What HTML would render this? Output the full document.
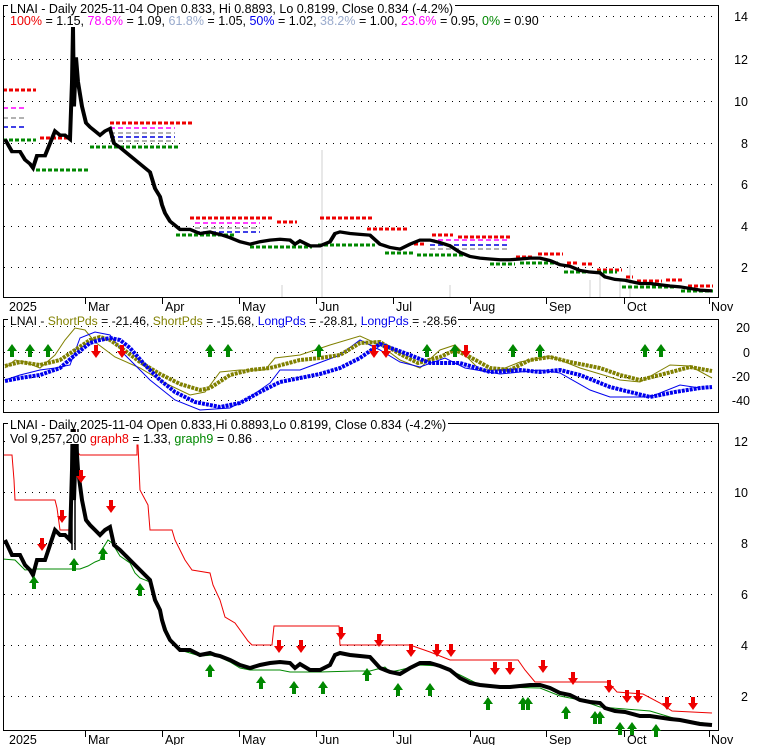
<!DOCTYPE html>
<html><head><meta charset="utf-8"><style>
html,body{margin:0;padding:0;background:#fff;}
svg{display:block;font-family:"Liberation Sans",sans-serif;}
</style></head><body>
<svg width="780" height="745" viewBox="0 0 780 745" xmlns="http://www.w3.org/2000/svg">
<defs>
<clipPath id="c1"><rect x="4" y="6" width="714" height="291"/></clipPath>
<clipPath id="c3"><rect x="4" y="424" width="714" height="306"/></clipPath>
<clipPath id="c2"><rect x="4" y="320" width="714" height="92"/></clipPath>
<polyline id="px" fill="none" points="5,540 12,555 20,555 25,565 30,570 33,575 37,560 45,560 50,545 55,530 60,535 65,535 70,540 72,470 73,403 74,500 76,440 78,470 82,500 86,520 90,525 95,530 100,535 105,530 110,527 114,545 120,550 125,555 130,560 135,565 140,570 150,580 155,600 160,610 162,620 165,630 170,640 175,645 180,650 190,650 200,655 210,653 215,655 220,656 230,660 240,665 250,668 260,665 270,663 280,662 290,663 295,668 300,664 310,670 320,670 330,665 335,655 340,653 350,655 360,656 370,657 380,668 385,670 390,672 400,674 410,668 420,663 430,663 440,666 450,670 460,678 470,683 480,685 490,686 500,687 510,687 520,686 530,685 540,685 550,688 560,693 570,695 580,700 590,702 600,703 605,708 615,711 625,712 640,716 650,716 670,719 680,720 690,722 700,724 712,725"/>
<g id="up"><polygon points="0,0 5,7 2,7 2,13 -2,13 -2,7 -5,7" fill="#008800"/></g>
<g id="dn"><polygon points="0,13 5,6 2,6 2,0 -2,0 -2,6 -5,6" fill="#ee0000"/></g>
</defs>

<!-- PANEL 1 -->
<rect x="3.5" y="5.5" width="715" height="292" fill="none" stroke="#000"/>
<g stroke="#000" stroke-dasharray="1,6" stroke-width="1">
<line x1="4" y1="16.5" x2="718" y2="16.5"/><line x1="4" y1="59.5" x2="718" y2="59.5"/><line x1="4" y1="101.5" x2="718" y2="101.5"/><line x1="4" y1="143.5" x2="718" y2="143.5"/><line x1="4" y1="184.5" x2="718" y2="184.5"/><line x1="4" y1="226.5" x2="718" y2="226.5"/><line x1="4" y1="267.5" x2="718" y2="267.5"/>
</g>
<g stroke="#e8e8e8" stroke-width="2">
<line x1="322" y1="150" x2="322" y2="297"/><line x1="630" y1="265" x2="630" y2="297"/><line x1="600" y1="275" x2="600" y2="297"/><line x1="590" y1="280" x2="590" y2="297"/><line x1="450" y1="285" x2="450" y2="297"/><line x1="282" y1="285" x2="282" y2="297"/><line x1="620" y1="280" x2="620" y2="297"/>
</g>
<g clip-path="url(#c1)" stroke-width="3" fill="none" stroke-dasharray="4,2">
<g stroke="#ee0000">
<line x1="3" y1="90" x2="36" y2="90"/><line x1="40" y1="138" x2="68" y2="138"/><line x1="110" y1="123" x2="192" y2="123"/><line x1="190" y1="218" x2="272" y2="218"/><line x1="277" y1="222" x2="297" y2="222"/><line x1="320" y1="218" x2="372" y2="218"/><line x1="367" y1="229" x2="409" y2="229"/><line x1="414" y1="244" x2="424" y2="244"/><line x1="432" y1="235" x2="453" y2="235"/><line x1="458" y1="237" x2="512" y2="237"/><line x1="516" y1="257" x2="534" y2="257"/><line x1="538" y1="254" x2="563" y2="254"/><line x1="567" y1="263" x2="578" y2="263"/><line x1="582" y1="264" x2="592" y2="264"/><line x1="597" y1="270" x2="622" y2="270"/><line x1="626" y1="277" x2="633" y2="277"/><line x1="637" y1="281" x2="662" y2="281"/><line x1="666" y1="280" x2="683" y2="280"/><line x1="688" y1="286" x2="713" y2="286"/>
</g>
<g stroke="#008800">
<line x1="3" y1="140" x2="36" y2="140"/><line x1="36" y1="170" x2="88" y2="170"/><line x1="90" y1="147" x2="178" y2="147"/><line x1="176" y1="235" x2="236" y2="235"/><line x1="250" y1="247" x2="312" y2="247"/><line x1="318" y1="245" x2="375" y2="245"/><line x1="385" y1="253" x2="413" y2="253"/><line x1="417" y1="255" x2="463" y2="255"/><line x1="490" y1="264" x2="515" y2="264"/><line x1="520" y1="263" x2="558" y2="263"/><line x1="564" y1="272" x2="592" y2="272"/><line x1="597" y1="272" x2="617" y2="272"/><line x1="622" y1="287" x2="676" y2="287"/><line x1="681" y1="291" x2="713" y2="291"/>
</g>
<g stroke-width="1.5" stroke-dasharray="5,3">
<line x1="110" y1="128" x2="175" y2="128" stroke="#ff00ff"/><line x1="110" y1="133" x2="175" y2="133" stroke="#999"/><line x1="110" y1="137" x2="175" y2="137" stroke="#0000dd"/><line x1="110" y1="141" x2="175" y2="141" stroke="#999"/>
<line x1="195" y1="223" x2="260" y2="223" stroke="#ff00ff"/><line x1="195" y1="228" x2="260" y2="228" stroke="#999"/><line x1="195" y1="232" x2="260" y2="232" stroke="#0000dd"/>
<line x1="430" y1="240" x2="510" y2="240" stroke="#ff00ff"/><line x1="430" y1="245" x2="510" y2="245" stroke="#0000dd"/><line x1="430" y1="249" x2="510" y2="249" stroke="#999"/>
<line x1="3" y1="108" x2="25" y2="108" stroke="#ff00ff"/><line x1="3" y1="118" x2="25" y2="118" stroke="#999"/><line x1="3" y1="127" x2="25" y2="127" stroke="#0000dd"/>
</g>
<use href="#px" transform="translate(0,-303.3) scale(1,0.8196)" stroke="#000" stroke-width="4" stroke-dasharray="none" style="vector-effect:non-scaling-stroke"/>
</g>
<rect x="8" y="0" width="447" height="12" fill="#fff"/>
<rect x="8" y="14" width="512" height="12" fill="#fff"/>
<text x="10" y="13" font-size="12.5">LNAI - Daily 2025-11-04 Open 0.833, Hi 0.8893, Lo 0.8199, Close 0.834 (-4.2%)</text>
<text x="10" y="25" font-size="12.5"><tspan fill="#ee0000">100%</tspan> = 1.15, <tspan fill="#ff00ff">78.6%</tspan> = 1.09, <tspan fill="#99aacc">61.8%</tspan> = 1.05, <tspan fill="#0000ee">50%</tspan> = 1.02, <tspan fill="#99aacc">38.2%</tspan> = 1.00, <tspan fill="#ff00ff">23.6%</tspan> = 0.95, <tspan fill="#008800">0%</tspan> = 0.90</text>
<g font-size="12.5" text-anchor="end">
<text x="748" y="21">14</text><text x="748" y="64">12</text><text x="748" y="106">10</text><text x="748" y="148">8</text><text x="748" y="189">6</text><text x="748" y="231">4</text><text x="748" y="272">2</text>
</g>
<g stroke="#000"><line x1="85.5" y1="298" x2="85.5" y2="304"/><line x1="162.5" y1="298" x2="162.5" y2="304"/><line x1="239.5" y1="298" x2="239.5" y2="304"/><line x1="316.5" y1="298" x2="316.5" y2="304"/><line x1="393.5" y1="298" x2="393.5" y2="304"/><line x1="470.5" y1="298" x2="470.5" y2="304"/><line x1="546.5" y1="298" x2="546.5" y2="304"/><line x1="624.5" y1="298" x2="624.5" y2="304"/><line x1="709.5" y1="298" x2="709.5" y2="304"/></g>
<g font-size="12.5"><text x="9" y="311">2025</text><text x="88" y="311">Mar</text><text x="165" y="311">Apr</text><text x="242" y="311">May</text><text x="319" y="311">Jun</text><text x="396" y="311">Jul</text><text x="473" y="311">Aug</text><text x="549" y="311">Sep</text><text x="627" y="311">Oct</text><text x="711" y="311">Nov</text></g>

<!-- PANEL 2 -->
<rect x="3.5" y="319.5" width="715" height="93" fill="none" stroke="#000"/>
<g stroke="#000" stroke-dasharray="1,6"><line x1="4" y1="326.5" x2="718" y2="326.5"/><line x1="4" y1="352.5" x2="718" y2="352.5"/><line x1="4" y1="377.5" x2="718" y2="377.5"/><line x1="4" y1="400.5" x2="718" y2="400.5"/></g>
<g clip-path="url(#c2)" fill="none">
<polyline stroke="#808000" stroke-width="1" points="5,368 15,360 25,362 40,368 55,355 65,340 75,328 85,330 95,342 115,357 140,368 165,383 190,395 205,392 220,372 240,370 265,370 275,358 300,355 330,345 360,336 380,345 400,360 420,368 440,350 455,345 465,355 480,370 500,370 520,362 550,356 580,368 620,380 640,382 670,365 690,366 712,378"/>
<polyline stroke="#0000ee" stroke-width="1" points="5,380 20,375 40,370 55,368 70,365 80,338 95,332 110,335 125,355 150,380 175,400 200,410 230,408 250,397 270,383 280,370 300,370 340,355 360,340 380,350 400,362 420,367 445,358 465,368 500,374 540,370 560,373 590,390 610,397 650,397 680,385 700,388"/>
<polyline stroke="#808000" stroke-width="4" stroke-dasharray="3,1" points="5,366 20,362 40,365 60,360 75,350 90,340 100,337 110,340 120,347 140,362 160,374 180,384 200,390 210,388 230,375 250,370 270,368 300,360 320,358 340,355 360,343 380,342 400,354 418,363 440,357 455,350 470,357 490,368 510,370 530,360 550,357 570,362 600,368 620,375 640,380 660,375 690,367 712,371"/>
<polyline stroke="#0000ee" stroke-width="4" stroke-dasharray="3,1" points="5,381 20,378 40,375 60,368 75,355 90,343 100,340 110,338 120,340 130,348 145,365 160,380 175,392 195,402 220,407 240,403 260,392 280,382 300,378 320,374 340,368 360,358 380,344 410,355 430,363 460,363 490,372 520,370 540,372 560,370 580,375 610,387 650,397 675,392 700,388 712,387"/>
</g>
<g>
<use href="#up" x="12" y="344"/><use href="#up" x="30" y="344"/><use href="#up" x="48" y="344"/><use href="#up" x="210" y="344"/><use href="#up" x="228" y="344"/><use href="#up" x="319" y="344"/><use href="#up" x="427" y="344"/><use href="#up" x="455" y="344"/><use href="#up" x="513" y="344"/><use href="#up" x="540" y="344"/><use href="#up" x="645" y="344"/><use href="#up" x="661" y="344"/>
<use href="#dn" x="96" y="345"/><use href="#dn" x="122" y="345"/><use href="#dn" x="374" y="345"/><use href="#dn" x="386" y="345"/><use href="#dn" x="466" y="345"/>
</g>
<rect x="8" y="313" width="450" height="12" fill="#fff"/>
<text x="10" y="325" font-size="12.2" textLength="447" lengthAdjust="spacingAndGlyphs">LNAI - <tspan fill="#808000">ShortPds</tspan> = -21.46, <tspan fill="#808000">ShortPds</tspan> = -15.68, <tspan fill="#0000ee">LongPds</tspan> = -28.81, <tspan fill="#0000ee">LongPds</tspan> = -28.56</text>
<g font-size="12.5" text-anchor="end"><text x="750" y="332">20</text><text x="750" y="357">0</text><text x="750" y="381">-20</text><text x="750" y="405">-40</text></g>

<!-- PANEL 3 -->
<rect x="3.5" y="423.5" width="715" height="307" fill="none" stroke="#000"/>
<g stroke="#000" stroke-dasharray="1,6"><line x1="4" y1="441.5" x2="718" y2="441.5"/><line x1="4" y1="492.5" x2="718" y2="492.5"/><line x1="4" y1="543.5" x2="718" y2="543.5"/><line x1="4" y1="594.5" x2="718" y2="594.5"/><line x1="4" y1="645.5" x2="718" y2="645.5"/><line x1="4" y1="696.5" x2="718" y2="696.5"/></g>
<g clip-path="url(#c3)" fill="none">
<polyline stroke="#ee0000" stroke-width="1" points="4,455 12,455 14,480 15,500 55,500 57,508 60,530 70,530 72,497 73,476 73,424 75,424 76,450 80,455 137,455 137,445 138,445 140,490 148,505 150,530 172,530 175,540 185,560 192,570 198,571 210,573 213,585 220,600 225,617 235,623 248,641 252,645 272,645 274,626 339,626 340,645 383,645 410,645 430,652 450,660 518,660 525,670 535,682 608,682 617,692 643,694 660,703 672,711 712,713"/>
<polyline stroke="#008800" stroke-width="1" points="3,559 15,560 25,570 35,569 80,569 88,566 95,562 100,560 103,548 108,540 112,543 120,556 130,563 135,573 140,578 150,582 158,605 165,625 170,640 180,650 200,656 215,655 230,662 240,668 250,670 280,670 290,672 320,672 355,671 370,671 385,667 390,672 400,670 420,665 440,666 460,675 480,685 500,687 540,688 560,696 580,700 600,707 650,711 680,720 712,724"/>
<use href="#px" stroke="#000" stroke-width="4"/>
<g stroke="#000" stroke-width="1.5"><line x1="72" y1="424" x2="72" y2="550"/><line x1="75" y1="424" x2="75" y2="550"/><line x1="78" y1="424" x2="78" y2="470"/></g>
</g>
<g>
<use href="#up" x="34" y="576"/><use href="#up" x="103" y="547"/><use href="#up" x="74" y="558"/><use href="#up" x="210" y="664"/><use href="#up" x="261" y="676"/><use href="#up" x="294" y="681"/><use href="#up" x="323" y="681"/><use href="#up" x="367" y="668"/><use href="#up" x="398" y="683"/><use href="#up" x="430" y="683"/><use href="#up" x="488" y="697"/><use href="#up" x="523" y="697"/><use href="#up" x="528" y="697"/><use href="#up" x="566" y="706"/><use href="#up" x="595" y="711"/><use href="#up" x="600" y="711"/><use href="#up" x="620" y="722"/><use href="#up" x="632" y="722"/><use href="#up" x="656" y="724"/><use href="#up" x="140" y="583"/>
<use href="#dn" x="42" y="538"/><use href="#dn" x="62" y="510"/><use href="#dn" x="81" y="470"/><use href="#dn" x="111" y="500"/><use href="#dn" x="279" y="640"/><use href="#dn" x="301" y="640"/><use href="#dn" x="341" y="627"/><use href="#dn" x="379" y="634"/><use href="#dn" x="411" y="644"/><use href="#dn" x="437" y="644"/><use href="#dn" x="451" y="644"/><use href="#dn" x="495" y="662"/><use href="#dn" x="510" y="662"/><use href="#dn" x="543" y="660"/><use href="#dn" x="573" y="672"/><use href="#dn" x="609" y="680"/><use href="#dn" x="627" y="690"/><use href="#dn" x="638" y="690"/><use href="#dn" x="667" y="697"/><use href="#dn" x="693" y="697"/>
</g>
<rect x="8" y="418" width="440" height="11" fill="#fff"/>
<rect x="8" y="432" width="245" height="12" fill="#fff"/>
<text x="10" y="429" font-size="12.5">LNAI - Daily 2025-11-04 Open 0.833,Hi 0.8893,Lo 0.8199, Close 0.834 (-4.2%)</text>
<text x="10" y="443" font-size="12.5">Vol 9,257,200 <tspan fill="#ee0000">graph8</tspan> = 1.33, <tspan fill="#008800">graph9</tspan> = 0.86</text>
<g font-size="12.5" text-anchor="end"><text x="748" y="446">12</text><text x="748" y="497">10</text><text x="748" y="548">8</text><text x="748" y="599">6</text><text x="748" y="650">4</text><text x="748" y="701">2</text></g>
<g stroke="#000"><line x1="85.5" y1="731" x2="85.5" y2="737"/><line x1="162.5" y1="731" x2="162.5" y2="737"/><line x1="239.5" y1="731" x2="239.5" y2="737"/><line x1="316.5" y1="731" x2="316.5" y2="737"/><line x1="393.5" y1="731" x2="393.5" y2="737"/><line x1="470.5" y1="731" x2="470.5" y2="737"/><line x1="546.5" y1="731" x2="546.5" y2="737"/><line x1="624.5" y1="731" x2="624.5" y2="737"/><line x1="709.5" y1="731" x2="709.5" y2="737"/></g>
<g font-size="12.5"><text x="9" y="744">2025</text><text x="88" y="744">Mar</text><text x="165" y="744">Apr</text><text x="242" y="744">May</text><text x="319" y="744">Jun</text><text x="396" y="744">Jul</text><text x="473" y="744">Aug</text><text x="549" y="744">Sep</text><text x="627" y="744">Oct</text><text x="711" y="744">Nov</text></g>
</svg>
</body></html>
